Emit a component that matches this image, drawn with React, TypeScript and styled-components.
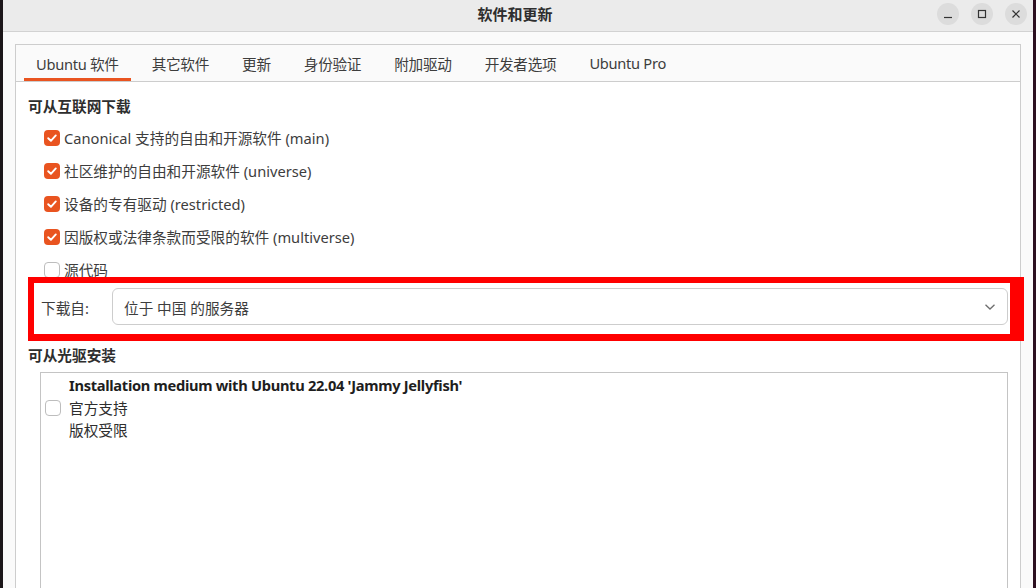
import styled, { createGlobalStyle } from "styled-components";

const GlobalStyle = createGlobalStyle`
  html, body {
    margin: 0;
    padding: 0;
    overflow: hidden;
    background: #2c0f20;
  }
  body {
    font-family: "Noto Sans", "Noto Sans CJK SC", sans-serif;
    font-size: 14.67px;
    color: #3d3d3d;
  }
`;

type Tab = { label: string; active?: boolean };

const tabs: Tab[] = [
  { label: "Ubuntu 软件", active: true },
  { label: "其它软件" },
  { label: "更新" },
  { label: "身份验证" },
  { label: "附加驱动" },
  { label: "开发者选项" },
  { label: "Ubuntu Pro" },
];

const sources = [
  { label: "Canonical 支持的自由和开源软件 (main)", checked: true },
  { label: "社区维护的自由和开源软件 (universe)", checked: true },
  { label: "设备的专有驱动 (restricted)", checked: true },
  { label: "因版权或法律条款而受限的软件 (multiverse)", checked: true },
  { label: "源代码", checked: false },
];

const CheckBox = ({ checked }: { checked?: boolean }) => (
  <Box $checked={checked}>
    {checked && (
      <svg width="12" height="12" viewBox="0 0 12 12">
        <path
          d="M2.2 6.2 L4.9 8.8 L9.8 3.4"
          fill="none"
          stroke="#fff"
          strokeWidth="1.9"
          strokeLinecap="round"
          strokeLinejoin="round"
        />
      </svg>
    )}
  </Box>
);

const App = () => {
  return (
    <Screen>
      <GlobalStyle />
      <Window>
        <TitleBar>
          <span />
          <Title>软件和更新</Title>
          <Controls>
            <RoundButton>
              <svg width="10" height="10" viewBox="0 0 10 10">
                <path d="M1 8.5 H9" stroke="#333" strokeWidth="1.2" />
              </svg>
            </RoundButton>
            <RoundButton>
              <svg width="10" height="10" viewBox="0 0 10 10">
                <rect x="1.5" y="1.5" width="7" height="7" fill="none" stroke="#333" strokeWidth="1.2" />
              </svg>
            </RoundButton>
            <RoundButton>
              <svg width="10" height="10" viewBox="0 0 10 10">
                <path d="M1.5 1.5 L8.5 8.5 M8.5 1.5 L1.5 8.5" stroke="#333" strokeWidth="1.2" />
              </svg>
            </RoundButton>
          </Controls>
        </TitleBar>
        <Body>
          <Notebook>
            <TabBar>
              {tabs.map((t) => (
                <TabItem key={t.label} $active={t.active}>
                  {t.label}
                </TabItem>
              ))}
            </TabBar>
            <Page>
              <Heading>可从互联网下载</Heading>
              <CheckList>
                {sources.map((s) => (
                  <CheckRow key={s.label}>
                    <CheckBox checked={s.checked} />
                    <span>{s.label}</span>
                  </CheckRow>
                ))}
              </CheckList>
              <Highlight>
                <MirrorLabel>下载自:</MirrorLabel>
                <Combo>
                  <span>位于 中国 的服务器</span>
                  <svg width="12" height="8" viewBox="0 0 12 8">
                    <path
                      d="M1.5 1.8 L6 6 L10.5 1.8"
                      fill="none"
                      stroke="#6e6e6e"
                      strokeWidth="1.3"
                    />
                  </svg>
                </Combo>
              </Highlight>
              <Heading $second>可从光驱安装</Heading>
              <ListBox>
                <MediumRow>
                  <CheckBox />
                  <MediumText>
                    <strong>Installation medium with Ubuntu 22.04 'Jammy Jellyfish'</strong>
                    <span>官方支持</span>
                    <span>版权受限</span>
                  </MediumText>
                </MediumRow>
              </ListBox>
            </Page>
          </Notebook>
        </Body>
      </Window>
    </Screen>
  );
};

const Screen = styled.div`
  width: 1036px;
  height: 588px;
  display: flex;
  border-left: 3px solid #1b1619;
  border-right: 3px solid #2c0f20;
  box-sizing: border-box;
`;

const Window = styled.div`
  flex: 1;
  display: flex;
  flex-direction: column;
  background: #fafafa;
  overflow: hidden;
`;

const TitleBar = styled.div`
  height: 32px;
  flex-shrink: 0;
  box-sizing: border-box;
  background: #ebebeb;
  border-bottom: 1px solid #d2d2d2;
  display: grid;
  grid-template-columns: 1fr auto 1fr;
  align-items: center;
  padding: 0 6px 3px 0;
`;

const Title = styled.div`
  font-weight: 700;
  font-size: 15px;
  color: #2e2e2e;
  margin-top: -2px;
`;

const Controls = styled.div`
  display: flex;
  justify-content: flex-end;
  gap: 12px;
`;

const RoundButton = styled.div`
  width: 22px;
  height: 22px;
  border-radius: 50%;
  background: #dcdcdc;
  display: flex;
  align-items: center;
  justify-content: center;
`;

const Body = styled.div`
  flex: 1;
  display: flex;
  padding: 12px 12px 0 12px;
`;

const Notebook = styled.div`
  flex: 1;
  display: flex;
  flex-direction: column;
  border: 1px solid #cdcdcd;
  border-bottom: none;
`;

const TabBar = styled.div`
  height: 37px;
  box-sizing: border-box;
  display: flex;
  gap: 9px;
  padding-left: 8px;
  background: #fafafa;
  border-bottom: 1px solid #cdcdcd;
  letter-spacing: -0.3px;
`;

const TabItem = styled.div<{ $active?: boolean }>`
  padding: 0 12px;
  display: flex;
  align-items: center;
  color: #3d3d3d;
  box-sizing: border-box;
  border-bottom: 3px solid ${(p) => (p.$active ? "#e95420" : "transparent")};
  padding-top: 3px;
`;

const Page = styled.div`
  flex: 1;
  background: #ffffff;
  display: flex;
  flex-direction: column;
  padding: 15px 0 0 12px;
`;

const Heading = styled.div<{ $second?: boolean }>`
  font-weight: 700;
  color: #2e2e2e;
  line-height: 18px;
  margin-top: ${(p) => (p.$second ? "5px" : "0")};
`;

const CheckList = styled.div`
  display: flex;
  flex-direction: column;
  padding-left: 16px;
  margin-top: 6px;
`;

const CheckRow = styled.div`
  height: 33px;
  display: flex;
  align-items: center;
  gap: 4px;
`;

const Box = styled.div<{ $checked?: boolean }>`
  width: 16px;
  height: 16px;
  box-sizing: border-box;
  border-radius: 4px;
  flex-shrink: 0;
  display: flex;
  align-items: center;
  justify-content: center;
  background: ${(p) => (p.$checked ? "#e95420" : "#ffffff")};
  border: ${(p) => (p.$checked ? "none" : "1px solid #bdbdbd")};
`;

const Highlight = styled.div`
  display: flex;
  align-items: center;
  border-style: solid;
  border-color: #ff0000;
  border-width: 6px 14px 7px 6px;
  margin: -9px -4px 0 0;
  padding: 5px 2px 9px 7px;
  background: #ffffff;
`;

const MirrorLabel = styled.div`
  width: 71px;
  flex-shrink: 0;
  color: #3d3d3d;
  padding-top: 1px;
`;

const Combo = styled.div`
  flex: 1;
  height: 37px;
  box-sizing: border-box;
  border: 1px solid #cdcdcd;
  border-radius: 6px;
  display: flex;
  align-items: center;
  justify-content: space-between;
  padding: 1px 11px 0 11px;
  color: #3d3d3d;
`;

const ListBox = styled.div`
  flex: 1;
  margin: 8px 12px 0 12px;
  border: 1px solid #c4c4c4;
  border-bottom: none;
  padding: 1px 0 0 4px;
`;

const MediumRow = styled.div`
  display: flex;
  align-items: center;
  gap: 8px;
`;

const MediumText = styled.div`
  display: flex;
  flex-direction: column;
  line-height: 22.5px;
  color: #2e2e2e;

  strong {
    font-weight: 700;
    color: #1e1e1e;
    letter-spacing: -0.3px;
  }
`;

export default App;
